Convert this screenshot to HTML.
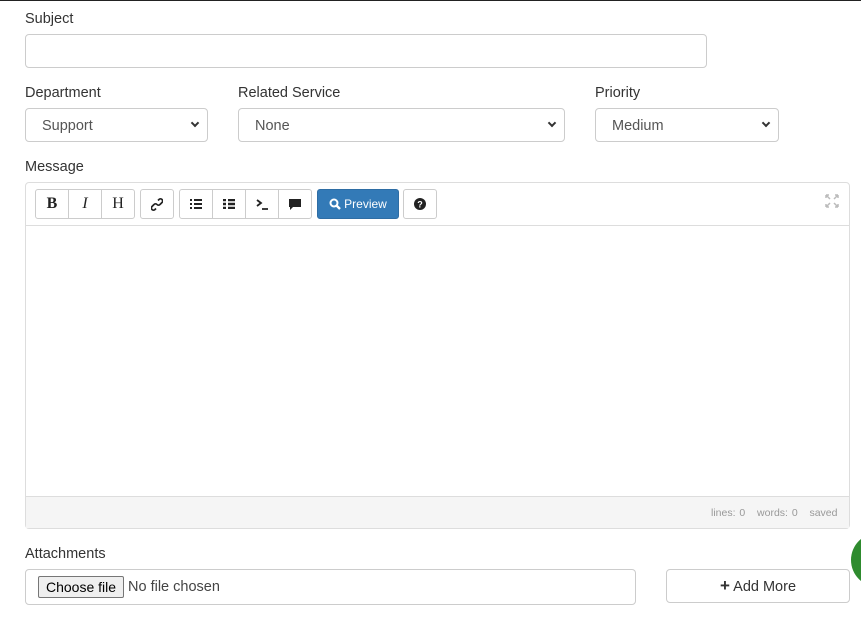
<!DOCTYPE html>
<html><head><style>
*{box-sizing:border-box;margin:0;padding:0}
body{width:861px;height:618px;background:#fff;font-family:"Liberation Sans",sans-serif;color:#333;position:relative;overflow:hidden}
.a{position:absolute}
.lbl{font-size:14.5px;color:#333}
.box{border:1px solid #ccc;border-radius:4px;background:#fff}
.sel{font-size:14.5px;color:#555;padding:9px 0 0 16px}
.chev{position:absolute;right:9px;top:11px;width:6px;height:6px;border-right:2px solid #333;border-bottom:2px solid #333;transform:rotate(45deg)}
.tb{position:absolute;top:189px;height:30px;border:1px solid #ccc;background:#fff;display:flex;align-items:center;justify-content:center;font-size:14px;color:#222}
</style></head><body>
<div class="a" style="left:0;top:0;width:861px;height:1px;background:#222"></div>
<div class="a lbl" style="left:25px;top:11px">Subject</div>
<div class="a box" style="left:25px;top:34px;width:682px;height:34px"></div>

<div class="a lbl" style="left:25px;top:85px">Department</div>
<div class="a box sel" style="left:25px;top:108px;width:183px;height:34px">Support<div class="chev"></div></div>
<div class="a lbl" style="left:238px;top:85px">Related Service</div>
<div class="a box sel" style="left:238px;top:108px;width:327px;height:34px">None<div class="chev"></div></div>
<div class="a lbl" style="left:595px;top:85px">Priority</div>
<div class="a box sel" style="left:595px;top:108px;width:184px;height:34px">Medium<div class="chev"></div></div>

<div class="a lbl" style="left:25px;top:159px">Message</div>
<div class="a" style="left:25px;top:182px;width:825px;height:347px;border:1px solid #ddd;border-radius:4px"></div>
<div class="a" style="left:26px;top:225px;width:823px;height:1px;background:#ddd"></div>
<div class="a" style="left:26px;top:496px;width:823px;height:32px;background:#f5f5f5;border-top:1px solid #ddd"></div>
<div class="a" style="left:711px;top:507px;font-size:10.5px;color:#999;word-spacing:1px">lines: 0&nbsp;&nbsp; words: 0&nbsp;&nbsp; saved</div>
<svg class="a" style="left:825px;top:194px" width="14" height="14"><path d="M1 1l4 4M1 1h3M1 1v3M13 1l-4 4M13 1h-3M13 1v3M1 13l4-4M1 13h3M1 13v-3M13 13l-4-4M13 13h-3M13 13v-3" stroke="#bbb" stroke-width="1.5" fill="none"/></svg>

<div class="tb" style="left:35px;width:34px;border-radius:3px 0 0 3px;font-family:'Liberation Serif';font-weight:bold;font-size:16px">B</div>
<div class="tb" style="left:68px;width:34px;font-family:'Liberation Serif';font-style:italic;font-size:16px">I</div>
<div class="tb" style="left:101px;width:34px;border-radius:0 3px 3px 0;font-family:'Liberation Serif';font-size:16px">H</div>
<div class="tb" style="left:140px;width:34px;border-radius:3px"><svg width="12" height="13" viewBox="0 0 12 13"><path d="M7 2.5l1-1a2 2 0 013 3l-2 2a2 2 0 01-3 0M5 10.5l-1 1a2 2 0 01-3-3l2-2a2 2 0 013 0" fill="none" stroke="#222" stroke-width="1.7"/></svg></div>
<div class="tb" style="left:179px;width:34px;border-radius:3px 0 0 3px"><svg width="12" height="10"><path d="M0 1h2M4 1h8M0 5h2M4 5h8M0 9h2M4 9h8" stroke="#222" stroke-width="2"/></svg></div>
<div class="tb" style="left:212px;width:34px"><svg width="12" height="10"><path d="M0 1h3M5 1h7M0 5h3M5 5h7M0 9h3M5 9h7" stroke="#222" stroke-width="2.4"/></svg></div>
<div class="tb" style="left:245px;width:34px"><svg width="13" height="11"><path d="M1 1l4 3-4 3M6 10h6" fill="none" stroke="#222" stroke-width="1.8"/></svg></div>
<div class="tb" style="left:278px;width:34px;border-radius:0 3px 3px 0"><svg width="12" height="11"><path d="M0 0h12v8H4l-3 3V8H0z" fill="#222"/></svg></div>
<div class="tb" style="left:317px;width:82px;border-radius:3px;background:#337ab7;border-color:#2e6da4;color:#fff;font-size:12px"><svg width="12" height="12" style="margin-right:3px"><circle cx="5" cy="5" r="3.5" fill="none" stroke="#fff" stroke-width="2"/><path d="M7.5 7.5l3.5 3.5" stroke="#fff" stroke-width="2.4"/></svg>Preview</div>
<div class="tb" style="left:403px;width:34px;border-radius:3px"><svg width="12" height="12"><circle cx="6" cy="6" r="6" fill="#222"/><text x="6" y="9.5" font-size="9" font-weight="bold" text-anchor="middle" fill="#fff" font-family="Liberation Sans">?</text></svg></div>

<div class="a lbl" style="left:25px;top:546px">Attachments</div>
<div class="a box" style="left:25px;top:569px;width:611px;height:36px"></div>
<div class="a" style="left:38px;top:576px;width:86px;height:22px;border:1px solid #767676;border-radius:2px;background:#efefef;font-size:14px;color:#000;text-align:center;line-height:20px">Choose file</div>
<div class="a" style="left:128px;top:579px;font-size:14.5px;color:#444">No file chosen</div>
<div class="a box" style="left:666px;top:569px;width:184px;height:34px;font-size:14.5px;color:#333;text-align:center;line-height:32px"><b style="font-size:17px">+</b> Add More</div>
<div class="a" style="left:851px;top:533px;width:54px;height:54px;border-radius:50%;background:#2e8b2e"></div>
</body></html>
